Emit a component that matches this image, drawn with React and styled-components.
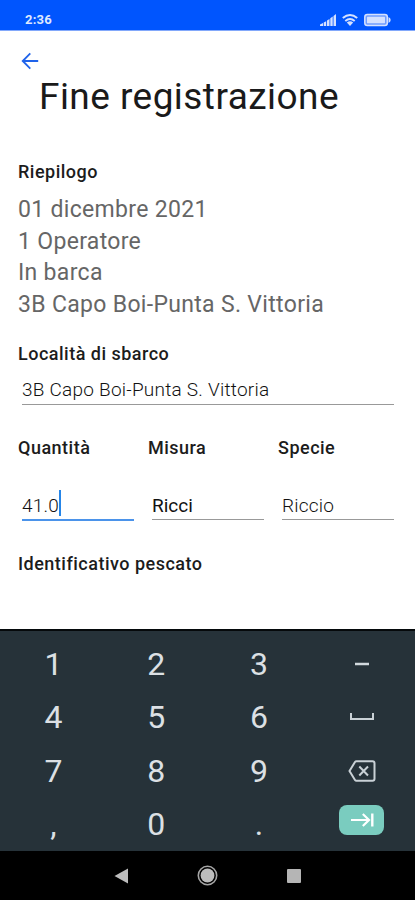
import React from "react";
import styled, { createGlobalStyle } from "styled-components";

const GlobalStyle = createGlobalStyle`
  * { box-sizing: border-box; }
  body { margin: 0; background: #fff; font-family: Roboto, sans-serif; }
`;

const Screen = styled.div`
  width: 415px;
  height: 900px;
  display: flex;
  flex-direction: column;
  background: #fff;
  overflow: hidden;
`;

const StatusBar = styled.header`
  height: 31px;
  flex: none;
  display: flex;
  align-items: center;
  justify-content: space-between;
  padding: 9px 24px 0 25px;
  background: #0055fe;
  border-bottom: 1px solid #82a8fb;
  color: #dfe8ff;
`;

const Clock = styled.span`
  font-size: 13px;
  font-weight: 700;
  line-height: 16px;
  letter-spacing: 0.2px;
`;

const Main = styled.main`
  flex: 1;
  display: flex;
  flex-direction: column;
  padding: 21px 18px 0;
`;

const BackButton = styled.button`
  width: 18px;
  height: 18px;
  margin-left: 3px;
  padding: 0;
  border: 0;
  background: none;
  display: block;
`;

const Title = styled.h1`
  margin: 6px 0 0 21px;
  font-size: 37px;
  line-height: 42px;
  font-weight: 400;
  letter-spacing: 0.45px;
  color: #1a1a1a;
  white-space: nowrap;
`;

const Label = styled.h2`
  margin: 0;
  font-size: 18px;
  line-height: 24px;
  font-weight: 500;
  letter-spacing: 0.49px;
  color: #1c1c1c;
  white-space: nowrap;
`;

const Summary = styled.section`
  margin-top: 42px;
`;

const SummaryText = styled.p`
  margin: 10px 0 0;
  font-size: 23px;
  line-height: 31.6px;
  letter-spacing: 0.32px;
  color: #666;
  white-space: nowrap;
`;

const Landing = styled.section`
  margin-top: 22px;
`;

const Input = styled.div`
  display: flex;
  align-items: center;
  height: ${(p) => (p.$active ? 33 : 32)}px;
  margin: ${(p) => p.$top}px 3px 0 4px;
  padding-top: ${(p) => p.$inset || 2}px;
  border-bottom: ${(p) => (p.$active ? "2px solid #4b93ea" : "1px solid #999")};
  font-size: 19px;
  font-weight: ${(p) => (p.$strong ? 400 : 300)};
  letter-spacing: ${(p) => p.$spacing || 0}px;
  color: #111;
  white-space: nowrap;
`;

const Caret = styled.span`
  width: 2px;
  height: 26px;
  margin-top: -5px;
  background: #2585e8;
`;

const Fields = styled.section`
  display: grid;
  grid-template-columns: repeat(3, 119px);
  column-gap: 11px;
  margin-top: 31px;
`;

const Catch = styled.section`
  margin-top: 31px;
`;

const Keyboard = styled.section`
  height: 222px;
  flex: none;
  display: grid;
  grid-template: repeat(4, 53.5px) / repeat(4, 102.8px);
  padding: 6px 2px 0;
  border-top: 2px solid #05090b;
  background: #263239;
`;

const Key = styled.button`
  display: flex;
  align-items: center;
  justify-content: center;
  padding: 0;
  border: 0;
  background: none;
  font: 400 32px/36px Roboto, sans-serif;
  color: #dce0e4;
`;

const NextPill = styled.span`
  display: flex;
  align-items: center;
  justify-content: center;
  width: 45px;
  height: 30px;
  margin-bottom: 8px;
  border-radius: 8px;
  background: #7accbf;
`;

const NavBar = styled.nav`
  height: 49px;
  flex: none;
  display: flex;
  align-items: center;
  justify-content: center;
  gap: 69px;
  background: #000;
`;

const StatusIcons = () => (
  <svg width="71" height="14" viewBox="0 0 71 14" fill="#d5e1ff">
    <path d="M0 13V11.4L3 10V13ZM3.7 13V9.5L6.2 8.2V13ZM7 13V7.5L9.5 5.9V13ZM10.3 13V5.3L12.7 3.6V13ZM13.5 13V3L16 1V13Z" />
    <g fill="none" stroke="#d5e1ff" strokeWidth="2">
      <path d="M22.8 5.1Q30 -1.1 37.2 5.1" />
      <path d="M25.3 7.9Q30 4 34.7 7.9" />
    </g>
    <path d="M26.8 9.6Q30 7 33.2 9.6L30 13Z" />
    <rect x="44.8" y="1.5" width="22.5" height="11" rx="2.5" fill="#6f9cff" stroke="#d5e1ff" strokeWidth="1.5" />
    <rect x="47" y="3.7" width="18" height="6.6" rx="0.5" />
    <path d="M68.5 4Q70.7 5 70.7 7T68.5 10Z" />
  </svg>
);

const BackArrow = () => (
  <svg width="18" height="18" viewBox="0 0 18 18" fill="none" stroke="#1f63ea" strokeWidth="1.8">
    <path d="M17.2 9H2M9.3 1.3L1.7 9L9.3 16.7" />
  </svg>
);

const Minus = () => (
  <svg width="16" height="4" viewBox="0 0 16 4"><path d="M1 2H15" stroke="#d2d9de" strokeWidth="2.5" /></svg>
);

const Space = () => (
  <svg width="26" height="9" viewBox="0 0 26 9" fill="none" stroke="#c9d1d6" strokeWidth="2">
    <path d="M2 0V6H24V0" />
  </svg>
);

const Backspace = () => (
  <svg width="28" height="22" viewBox="0 0 28 22" fill="none" stroke="#c9d1d6" strokeWidth="2">
    <path d="M8.5 1.2H24.5Q26.5 1.2 26.5 3.2V18.8Q26.5 20.8 24.5 20.8H8.5Q7.5 20.8 7 20L1.5 11L7 2Q7.5 1.2 8.5 1.2Z" />
    <path d="M11.3 6.5L20 15.5M20 6.5L11.3 15.5" />
  </svg>
);

const Next = () => (
  <svg width="24" height="14" viewBox="0 0 24 14" fill="none" stroke="#fff" strokeWidth="2.2">
    <path d="M1 7H19M12.8 1L19 7L12.8 13" />
    <path d="M22.3 .5V13.5" strokeWidth="2.4" />
  </svg>
);

const keys = [
  "1", "2", "3", <Minus />,
  "4", "5", "6", <Space />,
  "7", "8", "9", <Backspace />,
  ",", "0", ".", <NextPill><Next /></NextPill>,
];

export default function App() {
  return (
    <Screen>
      <GlobalStyle />
      <StatusBar>
        <Clock>2:36</Clock>
        <StatusIcons />
      </StatusBar>
      <Main>
        <BackButton aria-label="Indietro"><BackArrow /></BackButton>
        <Title>Fine registrazione</Title>
        <Summary>
          <Label>Riepilogo</Label>
          <SummaryText>
            01 dicembre 2021<br />1 Operatore<br />In barca<br />3B Capo Boi-Punta S. Vittoria
          </SummaryText>
        </Summary>
        <Landing>
          <Label>Località di sbarco</Label>
          <Input $top={7} $spacing={0.23}>3B Capo Boi-Punta S. Vittoria</Input>
        </Landing>
        <Fields>
          <div>
            <Label>Quantità</Label>
            <Input $top={28} $inset={4} $spacing={0.2} $active>41.0<Caret /></Input>
          </div>
          <div>
            <Label>Misura</Label>
            <Input $top={28} $inset={4} $strong>Ricci</Input>
          </div>
          <div>
            <Label>Specie</Label>
            <Input $top={28} $inset={4} $spacing={0.2}>Riccio</Input>
          </div>
        </Fields>
        <Catch>
          <Label>Identificativo pescato</Label>
        </Catch>
      </Main>
      <Keyboard>
        {keys.map((k, i) => <Key key={i}>{k}</Key>)}
      </Keyboard>
      <NavBar>
        <svg width="14" height="16" viewBox="0 0 14 16"><path d="M14 .5V15.5L.5 8Z" fill="#bdbdbd" /></svg>
        <svg width="21" height="21" viewBox="0 0 21 21">
          <circle cx="10.5" cy="10.5" r="9.2" fill="none" stroke="#a5a5a5" strokeWidth="1.6" />
          <circle cx="10.5" cy="10.5" r="6.9" fill="#bdbdbd" />
        </svg>
        <svg width="14" height="14" viewBox="0 0 14 14"><rect width="14" height="14" rx="1" fill="#b5b5b5" /></svg>
      </NavBar>
    </Screen>
  );
}
